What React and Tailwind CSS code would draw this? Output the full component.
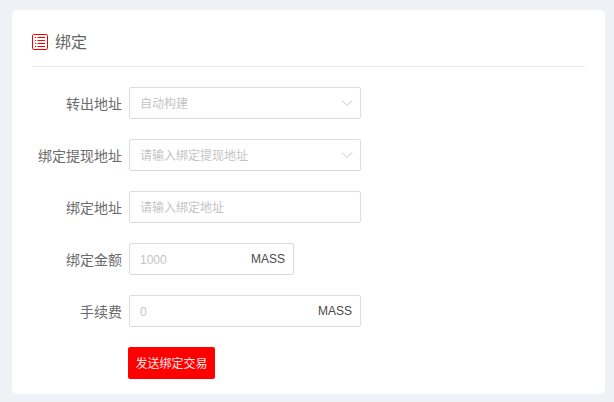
import React from "react";

const F = "font-['Helvetica_Neue','Liberation_Sans','Noto_Sans_CJK_SC',sans-serif]";

function Row({ label, children }) {
  return (
    <div className="flex items-center h-8 mb-5">
      <label className="w-[90px] shrink-0 text-right text-[14px] text-[#6b6b6b] pt-[2px]">{label}</label>
      <div className="ml-[7px]">{children}</div>
    </div>
  );
}

function Chevron() {
  return (
    <svg width="12" height="7" viewBox="0 0 12 7" fill="none" className="absolute right-[7px] top-[12px]">
      <path d="M1 0.5 L6 5.5 L11 0.5" stroke="#c4c4c4" strokeWidth="1" />
    </svg>
  );
}

function Field({ width, placeholder, select, suffix }) {
  return (
    <div className={`relative h-8 flex items-center justify-between border border-[#dcdcdc] rounded-[2px] bg-white pl-[10px] pr-[7px] ${width}`}>
      <span className="text-[12px] text-[#c4c4c4] pt-[2px]">{placeholder}</span>
      {suffix && <span className="text-[12px] text-[#4a4a4a] pr-px">{suffix}</span>}
      {select && <Chevron />}
    </div>
  );
}

export default function App() {
  return (
    <div className={`w-[614px] h-[402px] bg-[#f0f1f7] pt-[10px] pl-3 overflow-hidden ${F}`}>
      <div className="w-[593px] h-[384px] bg-white rounded-[5px] px-5 pt-[14px]">
        <div className="flex items-center h-[43px] pb-[6px] border-b border-[#e8e8e8]">
          <svg width="16" height="16" viewBox="0 0 16 16" fill="none" className="shrink-0">
            <rect x="0.5" y="0.5" width="15" height="15" rx="1" stroke="#f00000" />
            <path d="M5.5 3.5H13M5.5 6.5H13M5.5 9.5H13M5.5 12.5H13" stroke="#f00000" />
            <path d="M3 3.5H4.2M3 6.5H4.2M3 9.5H4.2M3 12.5H4.2" stroke="#f00000" />
          </svg>
          <span className="ml-[7px] text-[16px] text-[#666666] pt-[2px]">绑定</span>
        </div>
        <div className="pt-5">
          <Row label="转出地址"><Field width="w-[232px]" placeholder="自动构建" select /></Row>
          <Row label="绑定提现地址"><Field width="w-[232px]" placeholder="请输入绑定提现地址" select /></Row>
          <Row label="绑定地址"><Field width="w-[232px]" placeholder="请输入绑定地址" /></Row>
          <Row label="绑定金额"><Field width="w-[165px]" placeholder="1000" suffix="MASS" /></Row>
          <Row label="手续费"><Field width="w-[232px]" placeholder="0" suffix="MASS" /></Row>
          <div className="pl-[96px]">
            <button className="w-[87px] h-8 bg-[#ff0000] rounded-[2px] text-[#ffe5e5] text-[12px] pt-[2px]">发送绑定交易</button>
          </div>
        </div>
      </div>
    </div>
  );
}
